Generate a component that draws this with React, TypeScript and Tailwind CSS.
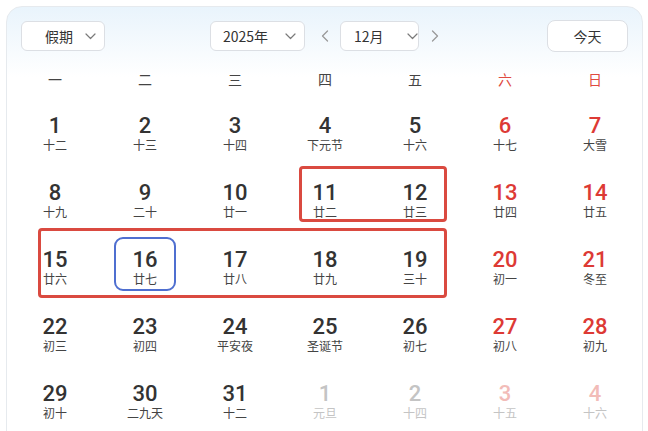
import React from "react";

type Cell = { d: number; l: string; faded?: boolean };

const rows: Cell[][] = [
  [
    { d: 1, l: "十二" },
    { d: 2, l: "十三" },
    { d: 3, l: "十四" },
    { d: 4, l: "下元节" },
    { d: 5, l: "十六" },
    { d: 6, l: "十七" },
    { d: 7, l: "大雪" },
  ],
  [
    { d: 8, l: "十九" },
    { d: 9, l: "二十" },
    { d: 10, l: "廿一" },
    { d: 11, l: "廿二" },
    { d: 12, l: "廿三" },
    { d: 13, l: "廿四" },
    { d: 14, l: "廿五" },
  ],
  [
    { d: 15, l: "廿六" },
    { d: 16, l: "廿七" },
    { d: 17, l: "廿八" },
    { d: 18, l: "廿九" },
    { d: 19, l: "三十" },
    { d: 20, l: "初一" },
    { d: 21, l: "冬至" },
  ],
  [
    { d: 22, l: "初三" },
    { d: 23, l: "初四" },
    { d: 24, l: "平安夜" },
    { d: 25, l: "圣诞节" },
    { d: 26, l: "初七" },
    { d: 27, l: "初八" },
    { d: 28, l: "初九" },
  ],
  [
    { d: 29, l: "初十" },
    { d: 30, l: "二九天" },
    { d: 31, l: "十二" },
    { d: 1, l: "元旦", faded: true },
    { d: 2, l: "十四", faded: true },
    { d: 3, l: "十五", faded: true },
    { d: 4, l: "十六", faded: true },
  ],
];

const weekdays = ["一", "二", "三", "四", "五", "六", "日"];

const cjk = { fontFamily: '"Noto Sans CJK SC", "Noto Sans", sans-serif' };
const num = { fontFamily: 'Roboto, "Noto Sans", sans-serif' };

function Chevron() {
  return (
    <svg width="11" height="7" viewBox="0 0 11 7" fill="none">
      <path d="M1 1 L5.5 5.5 L10 1" stroke="#7a7a7a" strokeWidth="1.2" strokeLinecap="round" strokeLinejoin="round" />
    </svg>
  );
}

function Arrow({ dir }: { dir: "l" | "r" }) {
  return (
    <svg width="8" height="12" viewBox="0 0 8 12" fill="none">
      <path
        d={dir === "l" ? "M6.5 1 L1.5 6 L6.5 11" : "M1.5 1 L6.5 6 L1.5 11"}
        stroke="#9a9a9a"
        strokeWidth="1.3"
        strokeLinecap="round"
        strokeLinejoin="round"
      />
    </svg>
  );
}

export default function App() {
  return (
    <div className="w-[648px] h-[431px] overflow-hidden bg-white" style={cjk}>
      <div className="ml-[6px] mt-[6px] w-[637px] h-[440px] rounded-t-[16px] border border-[#e6eaee] bg-gradient-to-b from-[#e9f4fc] via-white via-[70px] to-white pl-[3px] pt-[14px]">
        <div className="relative h-[30px] w-[630px] whitespace-nowrap">
          <div className="absolute left-[11px] top-0 flex h-[30px] w-[84px] items-center rounded-[6px] border border-[#dcdfe4] bg-white pl-[23px] text-[14px] text-[#333]">
            <span>假期</span>
            <span className="ml-[12px] flex"><Chevron /></span>
          </div>
          <div className="absolute left-[200px] top-0 flex h-[30px] w-[95px] items-center rounded-[6px] border border-[#dcdfe4] bg-white pl-[12px] text-[14px] text-[#333]">
            <span>2025年</span>
            <span className="ml-[17px] flex"><Chevron /></span>
          </div>
          <div className="absolute left-[311px] top-[9px] flex"><Arrow dir="l" /></div>
          <div className="absolute left-[330px] top-0 flex h-[30px] w-[79px] items-center rounded-[6px] border border-[#dcdfe4] bg-white pl-[13px] text-[14px] text-[#333]">
            <span>12月</span>
            <span className="ml-[23px] flex"><Chevron /></span>
          </div>
          <div className="absolute left-[421px] top-[9px] flex"><Arrow dir="r" /></div>
          <div className="absolute left-[537px] top-[-1px] flex h-[32px] w-[81px] items-center justify-center rounded-[8px] border border-[#dcdfe4] bg-white text-[14px] text-[#333]">
            今天
          </div>
        </div>

        <div className="mt-[9px] grid h-[38px] w-[630px] grid-cols-7 items-center">
          {weekdays.map((w, i) => (
            <div key={w} className={`text-center text-[14px] ${i >= 5 ? "text-[#e04a40]" : "text-[#444]"}`}>
              {w}
            </div>
          ))}
        </div>

        <div className="relative w-[630px]">
          {rows.map((r, ri) => (
            <div key={ri} className="grid h-[67px] grid-cols-7">
              {r.map((c, ci) => {
                const weekend = ci >= 5;
                let numColor = weekend ? "text-[#dd3a35]" : "text-[#333]";
                let lunColor = "text-[#444]";
                if (c.faded) {
                  numColor = weekend ? "text-[#f2bcb8]" : "text-[#c4c4c4]";
                  lunColor = "text-[#c4c4c4]";
                }
                return (
                  <div key={ci} className="flex flex-col items-center justify-center pt-[1px]">
                    <div className={`text-[22px] leading-[25px] font-medium ${numColor}`} style={num}>
                      {c.d}
                    </div>
                    <div className={`text-[12px] leading-[13px] ${lunColor}`}>{c.l}</div>
                  </div>
                );
              })}
            </div>
          ))}
          <div className="absolute left-[289px] top-[68px] h-[56px] w-[148px] rounded-[4px] border-[3px] border-[#da4a40]" />
          <div className="absolute left-[28px] top-[130px] h-[70px] w-[409px] rounded-[4px] border-[3px] border-[#da4a40]" />
          <div className="absolute left-[104px] top-[139px] h-[54px] w-[62px] rounded-[9px] border-2 border-[#4f6fd0]" />
        </div>
      </div>
    </div>
  );
}
